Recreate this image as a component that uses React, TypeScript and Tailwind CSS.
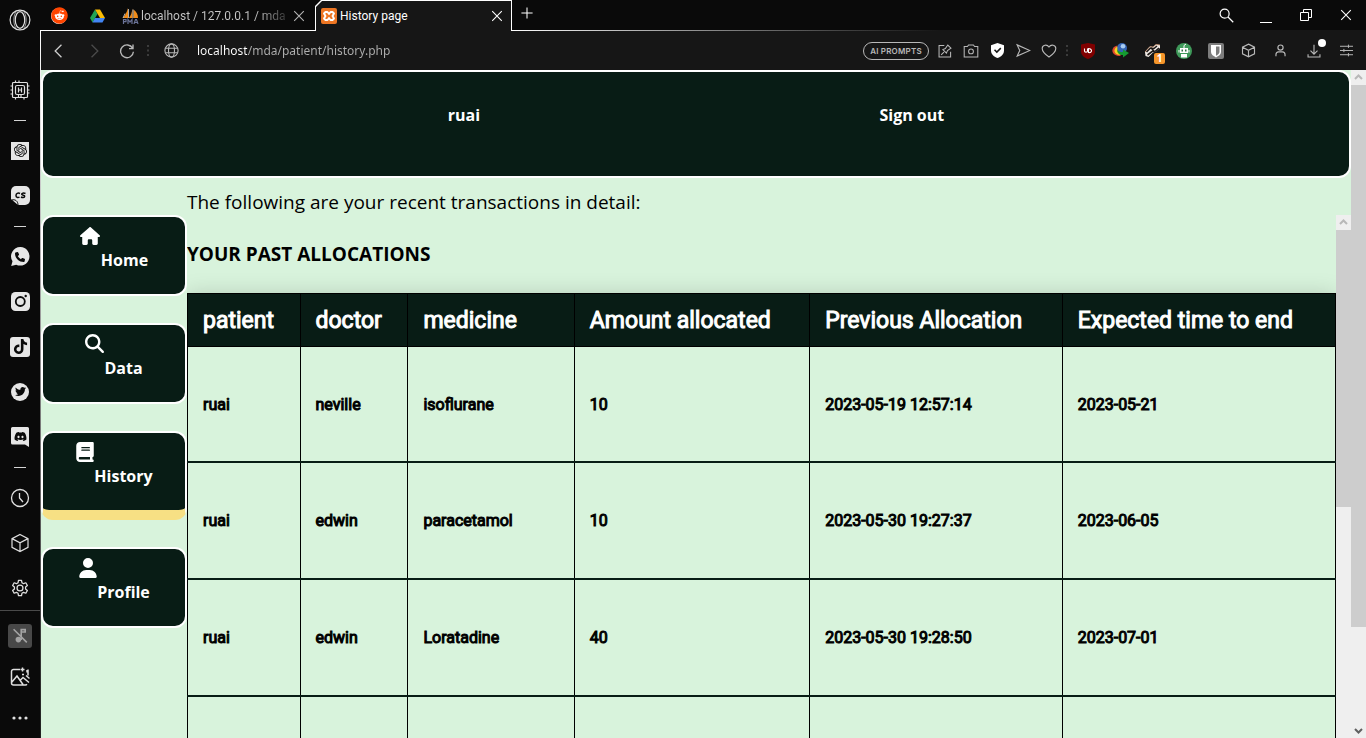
import type { ReactNode } from "react";
import { FaBook, FaDiscord, FaHouse, FaMagnifyingGlass, FaPhone, FaTiktok, FaTwitter, FaUser } from "react-icons/fa6";
import { FaReddit } from "react-icons/fa";
import { SiOpenai } from "react-icons/si";

/* ---------- helpers ---------- */

type LineProps = { size?: number; width?: number; className?: string; children: ReactNode };

/* Thin stroked icon on a 20 x 20 grid. */
function Line({ size = 20, width = 1, className = "", children }: LineProps) {
  return (
    <svg
      width={size}
      height={size}
      viewBox="0 0 20 20"
      fill="none"
      stroke="currentColor"
      strokeWidth={width}
      className={`shrink-0 ${className}`}
      aria-hidden="true"
    >
      {children}
    </svg>
  );
}

const Cube = ({ size = 20 }: { size?: number }) => (
  <Line size={size} width={size > 18 ? 1.2 : 1.5}>
    <path d="M10 1.5 18 5.6v8.8l-8 4.1-8-4.1V5.6zM2 5.6l8 4.2 8-4.2M10 9.8v8.7" />
  </Line>
);

const Cross = () => (
  <Line size={12} width={1.8}>
    <path d="M2 2 18 18M18 2 2 18" />
  </Line>
);

/* ---------- browser side bar ---------- */

const Opera = () => (
  <Line size={22} width={1.1}>
    <circle cx="10" cy="10" r="9" />
    <ellipse cx="10" cy="10" rx="4.3" ry="7.6" />
    <path d="M7 2.300C3.500 4.500 3.500 15.500 7 17.700M13 2.300C16.500 4.500 16.500 15.500 13 17.700" strokeWidth=".6" />
  </Line>
);

const Chip = () => (
  <Line width={1.2}>
    <rect x="2.500" y="2.500" width="15" height="15" rx="1" />
    <rect x="5.500" y="5.500" width="9" height="9" rx="1.500" />
    <path d="M8.500 7.500v5M11.500 7.500v5M8.500 10h3M5.500 0.500v2M9 0.500v2M0.500 6h2M0.500 10h2M0.500 14h2M17.500 6h2M17.500 10h2M17.500 13h2M8.500 14.500v3M11 14.500v3M5.500 17.500v2M14 17.500v2" />
  </Line>
);

const ChatCs = () => (
  <svg width="19" height="19" viewBox="0 0 19 19" aria-hidden="true">
    <path d="M5 0h9a5 5 0 0 1 5 5v9a5 5 0 0 1-5 5H7L0 13V5a5 5 0 0 1 5-5z" fill="#e6e6e6" />
    <path d="M1 14c3-1 6 1 6 5" stroke="#0a0a0a" fill="none" />
    <path d="M9 7.500C7 6.500 5 7.500 5 9.500s2 2.500 3.500 1.500M14.500 7.500c-2-.8-4-.3-3.800.8.300 1.200 3.300.8 3 2.200-.200 1.300-2.500 1.200-3.700.5" stroke="#0a0a0a" strokeWidth="1.500" fill="none" />
  </svg>
);

const Whatsapp = () => (
  <span className="relative flex size-[19px] items-center justify-center text-[#0a0a0a]">
    <svg className="absolute inset-0" width="19" height="19" viewBox="0 0 19 19" aria-hidden="true">
      <path d="M9.500 0a9.300 9.300 0 1 1-4.300 17.700L.2 19l1.300-4.800A9.300 9.300 0 0 1 9.500 0z" fill="#e6e6e6" />
    </svg>
    <FaPhone size={10} className="relative" />
  </span>
);

const Instagram = () => (
  <svg width="19" height="19" viewBox="0 0 19 19" aria-hidden="true">
    <rect width="19" height="19" rx="4.500" fill="#e6e6e6" />
    <circle cx="9.300" cy="9.500" r="4.500" stroke="#0a0a0a" strokeWidth="1.800" fill="none" />
    <circle cx="14.700" cy="4" r="1.200" fill="#0a0a0a" />
  </svg>
);

const Tiktok = () => (
  <span className="flex size-5 items-center justify-center rounded-[3px] bg-[#e6e6e6] text-[#0a0a0a]">
    <FaTiktok size={15} />
  </span>
);

const Twitter = () => (
  <span className="flex size-[18px] items-center justify-center rounded-full bg-[#e6e6e6] text-[#0a0a0a]">
    <FaTwitter size={11} />
  </span>
);

const Discord = () => (
  <span className="relative flex h-[20px] w-[18px] items-start justify-center pt-[3px] text-[#0a0a0a]">
    <svg className="absolute inset-0" width="18" height="20" viewBox="0 0 18 20" aria-hidden="true">
      <path d="M1.500 0h15A1.500 1.500 0 0 1 18 1.500V20l-4-2.500H1.500A1.500 1.500 0 0 1 0 16V1.500A1.500 1.500 0 0 1 1.500 0z" fill="#e6e6e6" />
    </svg>
    <FaDiscord size={13} className="relative" />
  </span>
);

const Clock = () => (
  <Line width={1.3}>
    <circle cx="10" cy="10" r="8.500" />
    <path d="M9.500 5v5l3.500 4" />
  </Line>
);

const Gear = () => (
  <Line size={18} width={1.4}>
    <circle cx="10" cy="10" r="3.300" />
    <path d="M8.300 1.500h3.400l.5 2.700 1.700 1 2.600-1 1.700 3-2 1.700v2.200l2 1.700-1.700 3-2.600-1-1.700 1-.5 2.700H8.300l-.5-2.700-1.700-1-2.600 1-1.700-3 2-1.700V8.900l-2-1.700 1.700-3 2.600 1 1.700-1z" strokeLinejoin="round" />
  </Line>
);

const MutedPlayer = () => (
  <span className="flex size-6 items-center justify-center rounded-[3px] bg-[#484848] text-[#a3a3a3]">
    <Line size={16} width={2}>
      <path d="M2 1.500 18.500 18M11.500 15V2h5v3h-4" />
      <circle cx="8" cy="14.500" r="3.500" fill="currentColor" stroke="none" />
    </Line>
  </span>
);

const Wallpaper = () => (
  <Line width={1.500}>
    <path d="M10 2.500H3.500a2 2 0 0 0-2 2V16a2 2 0 0 0 2 2h12a2 2 0 0 0 1.500-.7M1.500 15.500 7 9l6 8.500M10.500 13l2.500-2.500 6 5M12.500.5v4M10.500 2.500h4M17 3v2.500M12 7.500h2M16 8.500l3.500 3M18 2.500v6" />
  </Line>
);

const Dots = () => (
  <svg width="16" height="4" fill="currentColor" aria-hidden="true">
    <circle cx="2" cy="2" r="1.600" />
    <circle cx="8" cy="2" r="1.600" />
    <circle cx="14" cy="2" r="1.600" />
  </svg>
);

function SideButton({ label, short, children }: { label: string; short?: boolean; children: ReactNode }) {
  return (
    <button
      type="button"
      aria-label={label}
      className={`flex w-full shrink-0 items-center justify-center ${short ? "h-[41px]" : "h-[45px]"}`}
    >
      {children}
    </button>
  );
}

const Dash = () => <div className="mx-auto mt-2 mb-[7px] h-px w-3 shrink-0 bg-[#d4d4d4]" />;

function SideBar() {
  return (
    <aside className="flex w-10 shrink-0 flex-col overflow-hidden bg-[#0a0a0a] text-[#e0e0e0]">
      <button type="button" aria-label="Opera menu" className="mb-[27px] flex h-10 shrink-0 items-center justify-center">
        <Opera />
      </button>
      <SideButton label="GX Control"><Chip /></SideButton>
      <Dash />
      <SideButton label="ChatGPT">
        <span className="flex size-[18px] items-center justify-center bg-[#e6e6e6] text-[#0a0a0a]">
          <SiOpenai size={13} />
        </span>
      </SideButton>
      <SideButton label="ChatSonic"><ChatCs /></SideButton>
      <Dash />
      <SideButton label="WhatsApp"><Whatsapp /></SideButton>
      <SideButton label="Instagram"><Instagram /></SideButton>
      <SideButton label="TikTok"><Tiktok /></SideButton>
      <SideButton label="Twitter"><Twitter /></SideButton>
      <SideButton label="Discord"><Discord /></SideButton>
      <Dash />
      <SideButton label="History"><Clock /></SideButton>
      <SideButton label="Extensions"><Cube /></SideButton>
      <SideButton label="Settings"><Gear /></SideButton>
      <div className="border-t border-[#4a4a4a] pt-1">
        <SideButton label="Player" short><MutedPlayer /></SideButton>
        <SideButton label="Wallpaper" short><Wallpaper /></SideButton>
        <SideButton label="More" short><Dots /></SideButton>
      </div>
    </aside>
  );
}

/* ---------- tab strip ---------- */

const Drive = () => (
  <svg width="15" height="14" viewBox="0 0 15 14" aria-hidden="true">
    <path d="M5 0.500 0 9l2.500 4.500L7.500 5z" fill="#22a355" />
    <path d="M5 .5h5L15 9h-5z" fill="#fbbc04" />
    <path d="M5 9h10l-2.500 4.500h-10z" fill="#4285f4" />
  </svg>
);

const PhpMyAdmin = () => (
  <svg width="17" height="16" viewBox="0 0 17 16" className="shrink-0" aria-hidden="true">
    <path d="M6 0v10H.8C3 7.500 5 4 6 0zM10.500.5V10H6.800C9 7.500 10 4 10.500.5zM11.500 1.500c3 2 4.500 5 4.500 8.500h-4.500z" fill="#f08c1a" />
    <path d="M3 5.500 1 10M6.500 1v9M11 1.500V10" stroke="#d8d8d8" strokeWidth=".8" />
    <path d="M1.500 16v-4.500H4v2.200H1.500M6 16v-4.500l2 2.500 2-2.500V16M12 16l1.500-4.500h1L16 16M12.500 14.500h3" stroke="#6c7499" strokeWidth="1.200" fill="none" />
  </svg>
);

const Xampp = () => (
  <svg width="16" height="16" viewBox="0 0 16 16" className="shrink-0" aria-hidden="true">
    <rect width="16" height="16" rx="2" fill="#ee7623" />
    <path d="M4.500 4h2L8 6l1.500-2h2L13 5.500 11.500 8 13 10.500 11.500 12h-2L8 10l-1.500 2h-2L3 10.500 4.500 8 3 5.500z" stroke="#fff" strokeWidth="1.900" strokeLinejoin="round" fill="none" />
  </svg>
);

function TabStrip() {
  return (
    <div className="flex h-[31px] shrink-0 bg-[#0a0a0a] font-['Roboto',sans-serif] text-[12px] text-white">
      <div className="flex w-[275px] items-center border-b border-white pt-px">
        <button type="button" aria-label="Reddit" className="flex w-[38px] justify-center text-[#ff4500]">
          <span className="flex size-4 items-center justify-center rounded-full bg-white">
            <FaReddit size={17} className="shrink-0" />
          </span>
        </button>
        <button type="button" aria-label="Google Drive" className="flex w-[38px] justify-center"><Drive /></button>
        <button type="button" className="ml-1.5 flex min-w-0 items-center gap-0.5">
          <PhpMyAdmin />
          <span className="w-[146px] shrink-0 bg-linear-to-r from-[#c8c8c8] from-80% to-[#303030] bg-clip-text text-left whitespace-nowrap text-transparent">
            localhost / 127.0.0.1 / mda
          </span>
        </button>
        <button type="button" aria-label="Close tab" className="ml-1.5 text-[#b5b5b5]"><Cross /></button>
      </div>
      <div className="w-[197px] bg-white px-px pt-px [clip-path:polygon(0_6px,6px_0,100%_0,100%_100%,0_100%)]">
        <div className="flex h-full items-center bg-[#161616] pr-2 pl-[5px] [clip-path:polygon(0_6px,6px_0,100%_0,100%_100%,0_100%)]">
          <button type="button" className="flex flex-1 items-center gap-[3px]">
            <Xampp />
            History page
          </button>
          <button type="button" aria-label="Close tab"><Cross /></button>
        </div>
      </div>
      <div className="flex flex-1 flex-col justify-between">
        <div className="flex h-[30px] items-center justify-between">
          <button type="button" aria-label="New tab" className="ml-2 -mt-1">
            <Line size={14} width={1.500}><path d="M10 2v16M2 10h16" /></Line>
          </button>
          <div className="flex">
            <button type="button" aria-label="Search tabs" className="flex w-10 justify-center">
              <Line size={15} width={1.600}><circle cx="7.500" cy="7.500" r="6" /><path d="m12 12 7 7" /></Line>
            </button>
            <button type="button" aria-label="Minimise" className="flex w-10 items-end justify-center">
              <span className="h-px w-3 bg-white" />
            </button>
            <button type="button" aria-label="Restore" className="flex w-10 items-center justify-center">
              <svg width="12" height="12" fill="none" stroke="currentColor" aria-hidden="true">
                <path d="M.5 3.500h8v8h-8zM3.500 3.500v-3h8v8h-3" />
              </svg>
            </button>
            <button type="button" aria-label="Close window" className="flex w-10 items-center justify-center"><Cross /></button>
          </div>
        </div>
        <div className="h-px bg-linear-to-r from-white to-[#161616] to-50%" />
      </div>
    </div>
  );
}

/* ---------- tool bar ---------- */

function Tool({ label, wide, children }: { label: string; wide?: string; children: ReactNode }) {
  return (
    <button type="button" aria-label={label} className={`relative flex h-8 shrink-0 items-center justify-center ${wide ?? "w-[26px]"}`}>
      {children}
    </button>
  );
}

const Grip = ({ className }: { className: string }) => (
  <svg width="2" height="11" fill="#3c3c3c" className={`shrink-0 ${className}`} aria-hidden="true">
    <path d="M0 0h2v2H0zM0 4.500h2v2H0zM0 9h2v2H0z" />
  </svg>
);

function ToolBar() {
  return (
    <div className="flex h-[39px] shrink-0 items-center bg-[#161616] pr-[3px] text-[#b8b8b8]">
      <Tool label="Back" wide="w-9">
        <Line size={14} width={1.800} className="text-[#d0d0d0]"><path d="m13.500 1-9 9 9 9" /></Line>
      </Tool>
      <Tool label="Forward" wide="w-[33px]">
        <Line size={14} width={1.800} className="text-[#4c4c4c]"><path d="m6.500 1 9 9-9 9" /></Line>
      </Tool>
      <Tool label="Reload" wide="w-[33px]">
        <Line size={16} width={1.700}><path d="M17 6.500A8 8 0 1 0 18 11M17.500 2v5H12.500" /></Line>
      </Tool>
      <Grip className="mx-1" />
      <Tool label="Site information" wide="w-9">
        <Line size={15} width={1.500}>
          <circle cx="10" cy="10" r="8.800" />
          <ellipse cx="10" cy="10" rx="4" ry="8.800" />
          <path d="M2 7h16M2 13h16" />
        </Line>
      </Tool>
      <input
        aria-label="Address"
        defaultValue="localhost/mda/patient/history.php"
        className="ml-2 min-w-0 flex-1 bg-linear-to-r from-white from-[50px] to-[#b0b0b0] to-[50px] bg-clip-text text-[12px] text-transparent outline-none"
      />
      <button type="button" className="mr-[3px] h-[18px] w-[66px] rounded-full border border-[#b8b8b8] font-['Inter',sans-serif] text-[8px] font-semibold tracking-wide">
        AI PROMPTS
      </button>
      <Tool label="Pin page">
        <Line size={14} width={1.500}>
          <path d="M9 2H1.500v16.500H18V11M4.500 15.500l4-4M7 8l5 5 1.500-3.500L18.500 6 14 1.500 10.500 6.500z" />
        </Line>
      </Tool>
      <Tool label="Snapshot">
        <Line size={16} width={1.300}>
          <path d="M1.500 4.500h4l1.500-2h6l1.500 2h4v13h-17z" />
          <circle cx="10" cy="10.500" r="3" />
        </Line>
      </Tool>
      <Tool label="Ad blocker">
        <svg width="13" height="15" viewBox="0 0 13 15" aria-hidden="true">
          <path d="M6.500 0 13 2.200v5.300c0 3.500-2.500 6-6.500 7.500C2.500 13.500 0 11 0 7.500V2.200z" fill="#fff" />
          <path d="m3.500 6.800 2.300 2.300 4-4" stroke="#161616" strokeWidth="1.500" fill="none" />
        </svg>
      </Tool>
      <Tool label="Send to My Flow">
        <Line size={15} width={1.500}><path d="M1.500 2.500 18.500 10 1.500 17.500 5 10z" /></Line>
      </Tool>
      <Tool label="Bookmark">
        <Line size={16} width={1.400}>
          <path d="M10 17.500C3.500 13 1.500 10 1.500 6.800 1.500 2.300 7.500 1.200 10 5c2.500-3.800 8.500-2.700 8.500 1.800 0 3.200-2 6.200-8.500 10.700z" />
        </Line>
      </Tool>
      <Grip className="mx-1" />
      <Tool label="uBlock" wide="w-8">
        <svg width="14" height="16" viewBox="0 0 14 16" aria-hidden="true">
          <path d="M7 0 14 1.500v7c0 3.500-3 6-7 7.500-4-1.500-7-4-7-7.500v-7z" fill="#800000" />
          <path d="M3.500 5.500V8c0 1.500 3 1.500 3 0V5.500M7.500 5.500v4c4 .8 4-4 0-4z" stroke="#fff" strokeWidth="1.100" fill="none" />
        </svg>
      </Tool>
      <Tool label="Download manager" wide="w-8">
        <svg width="17" height="15" viewBox="0 0 17 15" aria-hidden="true">
          <circle cx="10" cy="5" r="5" fill="#3565b5" />
          <circle cx="11" cy="3.200" r="2.300" fill="#a9cdf2" />
          <path d="M5.500 2.500C1 3-.5 7 .8 9.500 2 12 5 13.500 9 13L6 10C4 8.500 4 5 5.500 2.500z" fill="#e0482e" />
          <path d="M5.500 3.500C2.500 4.500 2 8 3 9.500c1 1.800 3 2.500 6 2.500L7 9.500C5.500 8 5 5.500 5.500 3.500z" fill="#f5d321" />
          <path d="M5 6.500c1 2 3 2.500 6 2.500V6.500L17 10l-6 4.500V12C7 12 5 10 5 6.500z" fill="#159b31" />
        </svg>
      </Tool>
      <Tool label="Privacy Badger" wide="w-8">
        <svg width="17" height="14" viewBox="0 0 17 14" aria-hidden="true">
          <path d="M1 8 6 2.500 9 3l3-2.500 4 .5v3l-4 3.500-3 1-4.500 4.500-3-1z" fill="#f1ebe6" />
          <path d="m2.500 8 4-4 3.500.5L13 2M3.500 11 8 7.500l3.500-.5L15 4M7 3.500l3 4" stroke="#1e1917" strokeWidth="1.600" fill="none" />
          <path d="M1 8 6 2.500 9 3l3-2.500 4 .5" stroke="#c99674" strokeWidth=".8" fill="none" />
        </svg>
        <span className="absolute right-[3px] bottom-[3px] flex h-[11px] w-[11px] items-center justify-center rounded-xs bg-[#f5952a] text-[10px] font-bold text-white">
          1
        </span>
      </Tool>
      <Tool label="Robot" wide="w-8">
        <svg width="16" height="16" viewBox="0 0 16 16" aria-hidden="true">
          <circle cx="8" cy="8" r="8" fill="#3f9a5a" />
          <path d="M8 5V2.500l2-1.500" stroke="#fff" fill="none" />
          <path d="M4 5h8v5H4zM2.500 7h1v2.500h-1zM12.500 7h1v2.500h-1zM5 11h6v3.500H5z" fill="#fff" />
          <path d="M5.500 6.500H7v2H5.500zM9 6.500h1.500v2H9z" fill="#2c6e40" />
        </svg>
      </Tool>
      <Tool label="Bitwarden" wide="w-8">
        <svg width="16" height="16" viewBox="0 0 16 16" aria-hidden="true">
          <rect width="16" height="16" rx="2" fill="#7d7d7d" />
          <path d="M3 2h10v7c0 2.500-2.500 4-5 5.500C5.500 13 3 11.500 3 9z" fill="#fff" />
          <path d="M8 3.500h3.500V9c0 1.500-1.500 2.700-3.500 3.800z" fill="#7d7d7d" />
        </svg>
      </Tool>
      <Tool label="Extensions" wide="w-8"><Cube size={15} /></Tool>
      <Tool label="Profile" wide="w-[33px]">
        <Line size={13} width={1.800}><circle cx="10" cy="5.500" r="4" /><path d="M3 19v-2.500c0-3 2-4.500 4-4.500h6c2 0 4 1.500 4 4.500V19" /></Line>
      </Tool>
      <Tool label="Downloads" wide="w-[33px]">
        <Line size={14} width={1.600}><path d="M10 1v13M5 9.500l5 5 5-5M1.500 14.500v4h17v-4" /></Line>
        <span className="absolute top-1 right-1 size-2 rounded-full bg-white" />
      </Tool>
      <Tool label="Easy setup" wide="w-[33px]">
        <Line size={13} width={1.500}><path d="M0 3.500h20M0 10h20M0 16.500h20M13 1v5M6 7.500v5M13 14v5" /></Line>
      </Tool>
    </div>
  );
}

/* ---------- scroll bars ---------- */

const Chevron = ({ down }: { down?: boolean }) => (
  <svg width="15" height="15" fill="none" strokeWidth="2" className={`shrink-0 ${down ? "rotate-180 text-[#606060]" : "text-[#b8b8b8]"}`} stroke="currentColor" aria-hidden="true">
    <path d="m4 9 3.500-3.500L11 9" />
  </svg>
);

/* ---------- page ---------- */

const NAV = [
  { label: "Home", icon: <FaHouse size={20} className="mr-px" /> },
  { label: "Data", icon: <FaMagnifyingGlass size={19} /> },
  { label: "History", icon: <FaBook size={20} className="-mr-px" />, active: true },
  { label: "Profile", icon: <FaUser size={20} className="-mr-px" /> },
];

const COLUMNS = [
  { title: "patient", width: "w-[9.8%]" },
  { title: "doctor", width: "w-[9.4%]" },
  { title: "medicine", width: "w-[14.5%]" },
  { title: "Amount allocated", width: "w-[20.5%]" },
  { title: "Previous Allocation", width: "w-[22%]" },
  { title: "Expected time to end", width: "w-[23.8%]" },
];

const ROWS = [
  ["ruai", "neville", "isoflurane", "10", "2023-05-19 12:57:14", "2023-05-21"],
  ["ruai", "edwin", "paracetamol", "10", "2023-05-30 19:27:37", "2023-06-05"],
  ["ruai", "edwin", "Loratadine", "40", "2023-05-30 19:28:50", "2023-07-01"],
  ["", "", "", "", "", ""],
];

function Page() {
  return (
    <div className="flex min-h-0 flex-1 bg-[#d8f3dc] font-['Open_Sans',sans-serif] text-black">
      <div className="flex min-w-0 flex-1 flex-col">
        <header className="flex h-[108px] shrink-0 items-start justify-between rounded-[12px] border-2 border-white bg-[#081c15] px-[30.9%] pt-[31px] text-base font-bold text-white">
          <a href="#user">ruai</a>
          <a href="#signout">Sign out</a>
        </header>
        <div className="flex min-h-0 flex-1">
          <nav className="flex w-[146px] shrink-0 flex-col gap-[27px] pt-[37px]">
            {NAV.map((item) => (
              <a
                key={item.label}
                href={`#${item.label.toLowerCase()}`}
                className={`flex shrink-0 items-start justify-center rounded-[12px] border-2 border-white bg-[#081c15] pt-[9px] text-base font-bold text-white ${
                  item.active ? "h-[89px] border-b-10 border-b-[#f7e084]" : "h-[81px]"
                }`}
              >
                {item.icon}
                <span className="pt-[22px]">{item.label}</span>
              </a>
            ))}
          </nav>
          <main className="flex min-w-0 flex-1 flex-col">
            <p className="h-[37px] shrink-0 pt-2.5 text-[19px] leading-7">The following are your recent transactions in detail:</p>
            <div className="flex min-h-0 flex-1">
              <div className="min-w-0 flex-1 overflow-hidden">
                <h1 className="pt-[25px] pb-[25px] text-[19px] leading-7 font-bold">YOUR PAST ALLOCATIONS</h1>
                <table className="w-full table-fixed border-collapse text-left font-['Roboto',sans-serif] shadow-[0_0_20px_rgba(0,0,0,0.15)] [-webkit-text-stroke:1px]">
                  <thead>
                    <tr className="h-[53px] bg-[#081c15] text-[23px] text-white">
                      {COLUMNS.map((column) => (
                        <th key={column.title} className={`border border-black px-[15px] pt-0.5 pb-0 font-normal whitespace-nowrap ${column.width}`}>
                          {column.title}
                        </th>
                      ))}
                    </tr>
                  </thead>
                  <tbody>
                    {ROWS.map((row, index) => (
                      <tr key={index} className="h-[117px] border-b-2 border-[#081c15] text-base first:h-[115px]">
                        {row.map((cell, column) => (
                          <td key={column} className="border-x border-x-black px-[15px] pt-0.5 pb-0">{cell}</td>
                        ))}
                      </tr>
                    ))}
                  </tbody>
                </table>
              </div>
              <div className="flex w-[15px] shrink-0 flex-col bg-[#efefef]">
                <Chevron />
                <div className="h-[53%] bg-[#cdcdcd]" />
              </div>
            </div>
          </main>
        </div>
      </div>
      <div className="flex w-[15px] shrink-0 flex-col bg-[#efefef]">
        <Chevron />
        <div className="min-h-0 flex-[85] bg-[#cdcdcd]" />
        <div className="min-h-0 flex-[15]" />
        <Chevron down />
      </div>
    </div>
  );
}

export default function App() {
  return (
    <div className="flex h-screen overflow-hidden bg-[#0a0a0a] font-['Noto_Sans',sans-serif]">
      <SideBar />
      <div className="flex min-w-0 flex-1 flex-col">
        <TabStrip />
        <div className="flex min-h-0 flex-1">
          <div className="w-px shrink-0 bg-linear-to-b from-white to-[#202020]" />
          <div className="flex min-w-0 flex-1 flex-col">
            <ToolBar />
            <Page />
          </div>
        </div>
      </div>
    </div>
  );
}
